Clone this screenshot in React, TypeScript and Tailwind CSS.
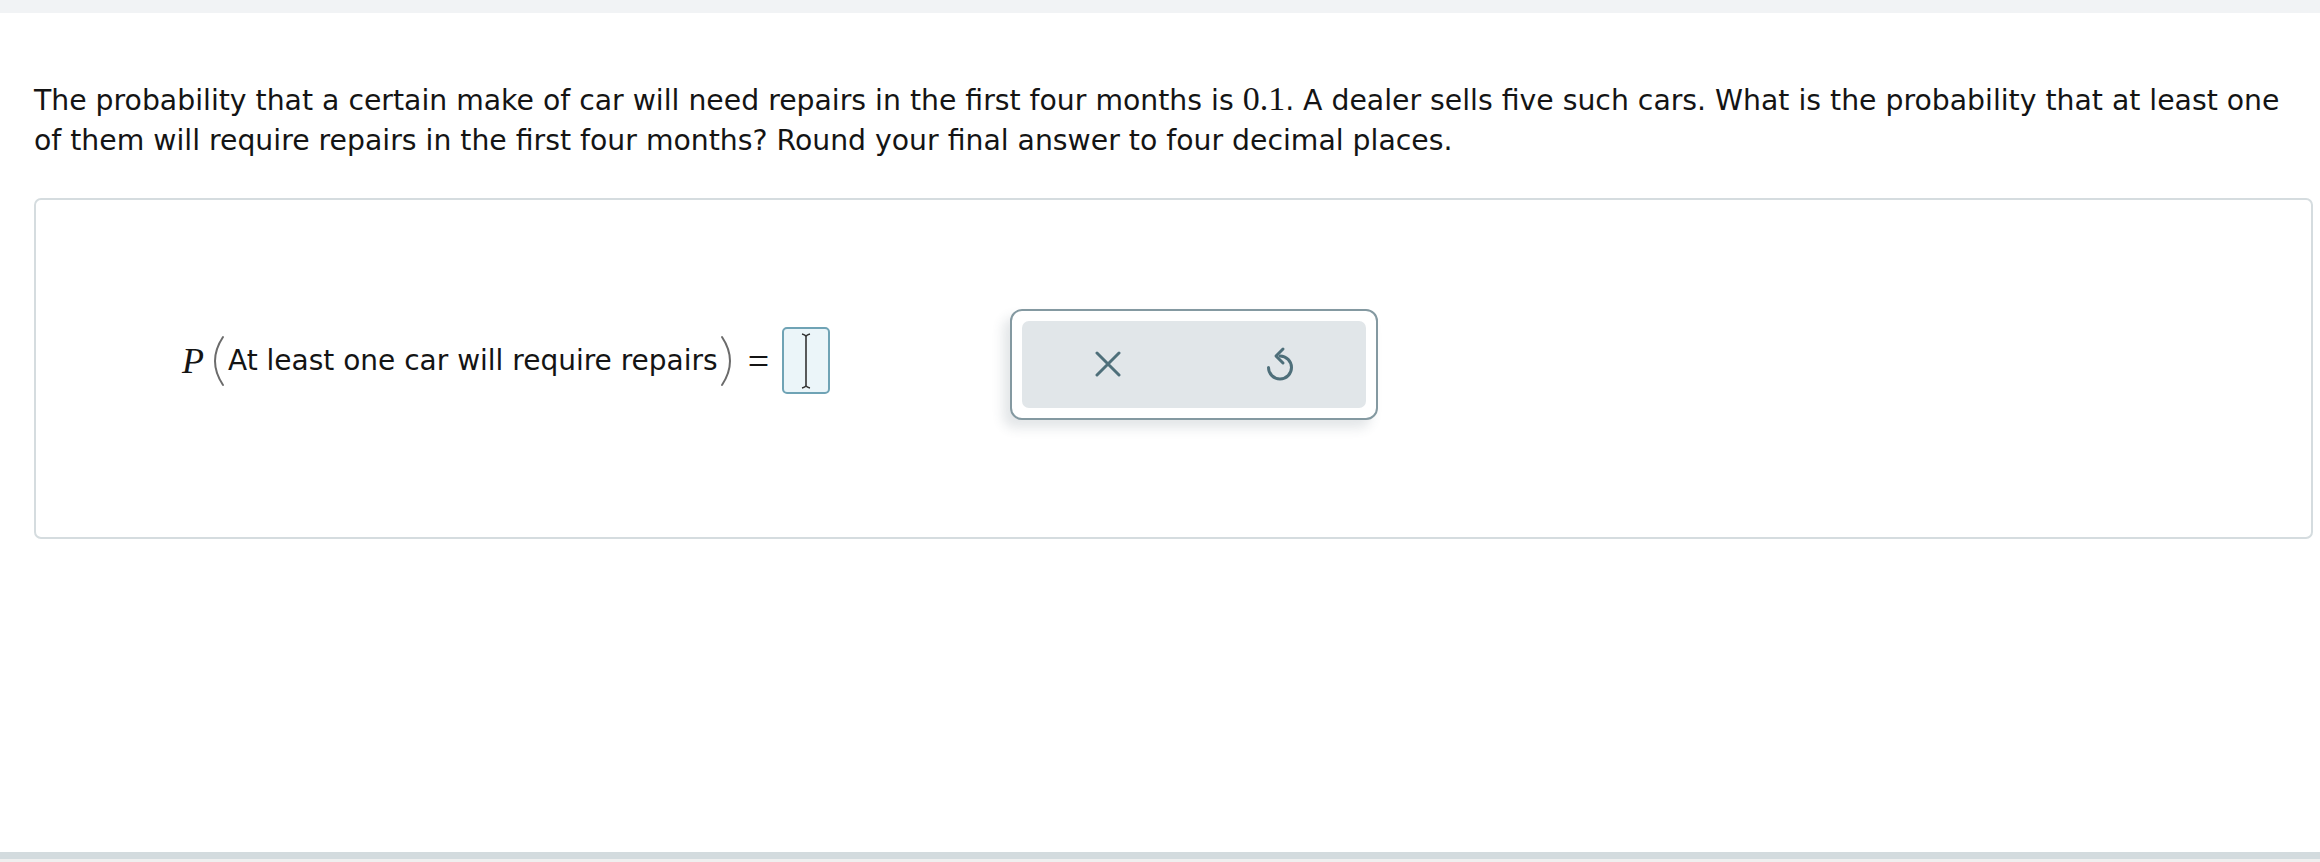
import React from 'react'

function Paren({ right }: { right?: boolean }) {
  return (
    <svg width="12" height="52" viewBox="0 0 12 52" className="shrink-0">
      <path
        d={right ? 'M2 2 Q10 14 10 26 Q10 38 2 50' : 'M10 2 Q2 14 2 26 Q2 38 10 50'}
        fill="none"
        stroke="#6b6b6b"
        strokeWidth="2"
        strokeLinecap="round"
      />
    </svg>
  )
}

function CursorBox() {
  return (
    <div className="w-[48px] h-[67px] rounded-[5px] border-2 border-[#6fa3b5] bg-[#ebf5f9] flex items-center justify-center">
      <svg width="14" height="58" viewBox="0 0 14 58">
        <path d="M3 2 Q7 3 7 5 Q7 3 11 2" fill="none" stroke="#333" strokeWidth="1.4" />
        <line x1="7" y1="5" x2="7" y2="53" stroke="#333" strokeWidth="1.6" />
        <path d="M3 56 Q7 55 7 53 Q7 55 11 56" fill="none" stroke="#333" strokeWidth="1.4" />
      </svg>
    </div>
  )
}

function ClearIcon() {
  return (
    <svg width="26" height="26" viewBox="0 0 26 26">
      <path d="M2 2 L24 24 M24 2 L2 24" stroke="#4e6f7a" strokeWidth="3" strokeLinecap="round" />
    </svg>
  )
}

function UndoIcon() {
  return (
    <svg width="30" height="36" viewBox="0 0 30 36">
      <path
        d="M15 10 A11.5 11.5 0 1 1 3.5 21.5"
        fill="none"
        stroke="#4e6f7a"
        strokeWidth="3"
        strokeLinecap="round"
      />
      <path d="M18 3 L11 10 L18 17" fill="none" stroke="#4e6f7a" strokeWidth="3" strokeLinecap="round" strokeLinejoin="round" />
    </svg>
  )
}

export default function App() {
  return (
    <div className="w-[2320px] h-[862px] flex flex-col bg-white text-[#141414] font-['DejaVu_Sans','Verdana',sans-serif]">
      <div className="h-[13px] bg-[#f1f3f5]" />
      <div className="flex-1 pl-[34px] pr-[7px] pt-[66px]">
        <p className="text-[28.3px] leading-[40px]">
          The probability that a certain make of car will need repairs in the first four months is{' '}
          <span className="font-['Liberation_Serif',serif] text-[34px]">0.1</span>. A dealer sells five such cars. What is
          the probability that at least one
          <br />
          of them will require repairs in the first four months? Round your final answer to four decimal places.
        </p>

        <div className="mt-[37px] h-[341px] rounded-[7px] border-2 border-[#d5dcdf] flex items-center pl-[146px] pb-[9px]">
          <div className="flex items-center mb-[7px]">
            <span className="font-['Liberation_Serif',serif] italic text-[36px] leading-none mr-[9px]">P</span>
            <Paren />
            <span className="text-[28px] ml-[3px] mr-[2px]">At least one car will require repairs</span>
            <Paren right />
            <span className="font-['Liberation_Serif',serif] text-[38px] leading-none ml-[16px] mr-[13px]">=</span>
            <CursorBox />
          </div>

          <div className="ml-[180px] w-[368px] h-[111px] rounded-[12px] border-2 border-[#8499a1] bg-white p-[10px] shadow-[-7px_8px_12px_rgba(60,80,90,0.14)]">
            <div className="h-full rounded-[7px] bg-[#e1e6e9] flex items-center">
              <div className="flex-1 flex justify-center">
                <ClearIcon />
              </div>
              <div className="flex-1 flex justify-center">
                <UndoIcon />
              </div>
            </div>
          </div>
        </div>
      </div>
      <div className="h-[7px] bg-[#d3dbde]" />
      <div className="h-[3px] bg-[#efefef]" />
    </div>
  )
}
